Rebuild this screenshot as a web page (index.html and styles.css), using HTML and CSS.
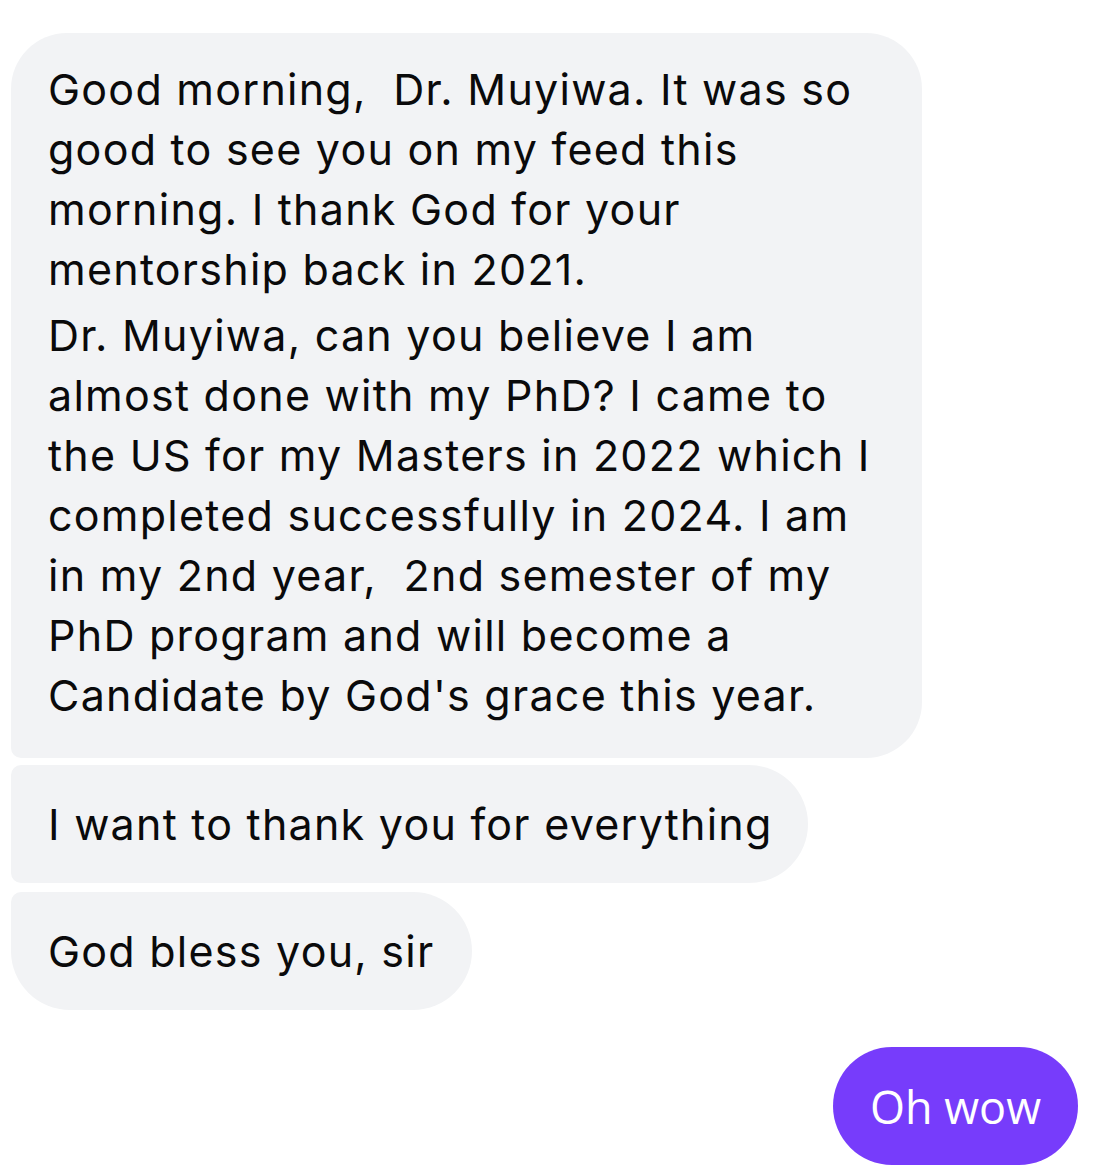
FILE: index.html
```html
<!DOCTYPE html>
<html lang="en">

<head>
    <meta charset="UTF-8">
    <meta name="viewport" content="width=device-width, initial-scale=1.0">
    <title>Chat</title>
    <link rel="stylesheet" href="styles.css">
</head>

<body>
    <div class="thread">
        <div class="bubble bubble-first">
            <p>Good morning,&nbsp; Dr. Muyiwa. It was so<br>good to see you on my feed this<br>morning. I thank God for your<br>mentorship back in 2021.</p>
            <p>Dr. Muyiwa, can you believe I am<br>almost done with my PhD? I came to<br>the US for my Masters in 2022 which I<br>completed successfully in 2024. I am<br>in my 2nd year,&nbsp; 2nd semester of my<br>PhD program and will become a<br>Candidate by God's grace this year.</p>
        </div>
        <div class="bubble bubble-middle">
            <p>I want to thank you for everything</p>
        </div>
        <div class="bubble bubble-last">
            <p>God bless you, sir</p>
        </div>
        <div class="bubble-out">Oh wow</div>
    </div>
</body>

</html>
```

FILE: styles.css
```css
body {
    margin: 0;
    padding: 0;
    background-color: #fff;
    font-family: Inter, "Noto Sans", sans-serif;
    color: #0a0a0b;
}

.thread {
    display: flex;
    flex-direction: column;
    align-items: flex-start;
    gap: 7px;
    padding: 33px 24px 0 11px;
    height: 1167px;
    box-sizing: border-box;
    overflow: hidden;
}

.bubble {
    flex-shrink: 0;
    background-color: #f2f3f5;
    box-sizing: border-box;
    height: 118px;
    padding: 29px 37px;
    font-size: 43px;
    line-height: 60px;
    letter-spacing: 1.25px;
    white-space: nowrap;
}

.bubble p {
    margin: 0;
}

.bubble p + p {
    margin-top: 6px;
}

/* first in a group: round top-left, square bottom-left */
.bubble-first {
    width: 911px;
    height: 725px;
    padding-top: 26px;
    padding-bottom: 33px;
    border-radius: 56px 56px 56px 10px;
}

.bubble-middle {
    width: 797px;
    border-radius: 10px 59px 59px 10px;
}

.bubble-last {
    width: 461px;
    margin-top: 2px;
    border-radius: 10px 59px 59px 59px;
}

.bubble-out {
    flex-shrink: 0;
    align-self: flex-end;
    margin-top: 30px;
    width: 245px;
    height: 118px;
    box-sizing: border-box;
    display: flex;
    align-items: center;
    justify-content: center;
    background-color: #773cfb;
    color: #fff;
    border-radius: 59px;
    font-family: "Open Sans", sans-serif;
    font-size: 45px;
}
```
